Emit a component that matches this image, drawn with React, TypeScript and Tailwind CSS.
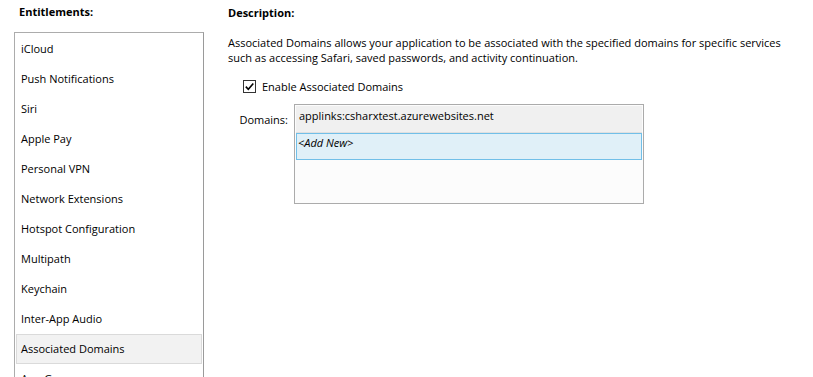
import React from "react";

const items = [
  "iCloud",
  "Push Notifications",
  "Siri",
  "Apple Pay",
  "Personal VPN",
  "Network Extensions",
  "Hotspot Configuration",
  "Multipath",
  "Keychain",
  "Inter-App Audio",
  "Associated Domains",
  "App Groups",
];

export default function App() {
  return (
    <div
      className="w-[813px] h-[377px] overflow-hidden bg-white text-[11px] text-black flex"
      style={{ fontFamily: '"Open Sans", "Noto Sans", sans-serif' }}
    >
      <div className="w-[204px] pl-[14px] flex flex-col shrink-0">
        <div className="shrink-0 pt-[4px] pl-[5px] h-[32px] font-bold text-black leading-[16px]">Entitlements:</div>
        <div className="shrink-0 border border-[#acacac] border-r-[#9a9a9a] bg-white px-px pt-px flex flex-col">
          {items.map((it) => {
            const sel = it === "Associated Domains";
            return (
              <div
                key={it}
                className={
                  "h-[30px] shrink-0 flex items-center " +
                  (sel ? "bg-[#f2f2f2] border border-[#dadada] pl-[4px]" : "pl-[5px]")
                }
              >
                {it}
              </div>
            );
          })}
        </div>
      </div>
      <div className="ml-[24px] flex flex-col">
        <div className="shrink-0 pt-[5px] h-[35px] font-bold text-black leading-[16px]">Description:</div>
        <p className="leading-[15px] w-[580px]">
          Associated Domains allows your application to be associated with the specified domains for specific services
          <br />
          such as accessing Safari, saved passwords, and activity continuation.
        </p>
        <div className="flex items-center mt-[15px] ml-[15px] h-[13px]">
          <div className="w-[13px] h-[13px] border border-[#333333] bg-white flex items-center justify-center">
            <svg width="11" height="11" viewBox="0 0 11 11">
              <path d="M1.8 5.6 L4.3 8.2 L9.3 2.4" fill="none" stroke="#000" strokeWidth="1.6" />
            </svg>
          </div>
          <span className="ml-[6px] leading-[16px]">Enable Associated Domains</span>
        </div>
        <div className="flex mt-[11px]">
          <div className="w-[66px] pr-[6px] text-right pt-[8px] leading-[16px]">Domains:</div>
          <div className="w-[350px] h-[100px] border border-[#ababab] bg-[#fcfcfc] p-px flex flex-col">
            <div className="h-[27px] bg-[#f0f0f0] border-b border-[#e0e0e0] pl-[3px] pt-[2px] leading-[16px] text-black">
              applinks:csharxtest.azurewebsites.net
            </div>
            <div className="h-[27px] bg-[#e0f0f8] border border-[#71bfe8] pl-[1px] pt-[1px] leading-[16px] italic text-black">
              &lt;Add New&gt;
            </div>
          </div>
        </div>
      </div>
    </div>
  );
}
